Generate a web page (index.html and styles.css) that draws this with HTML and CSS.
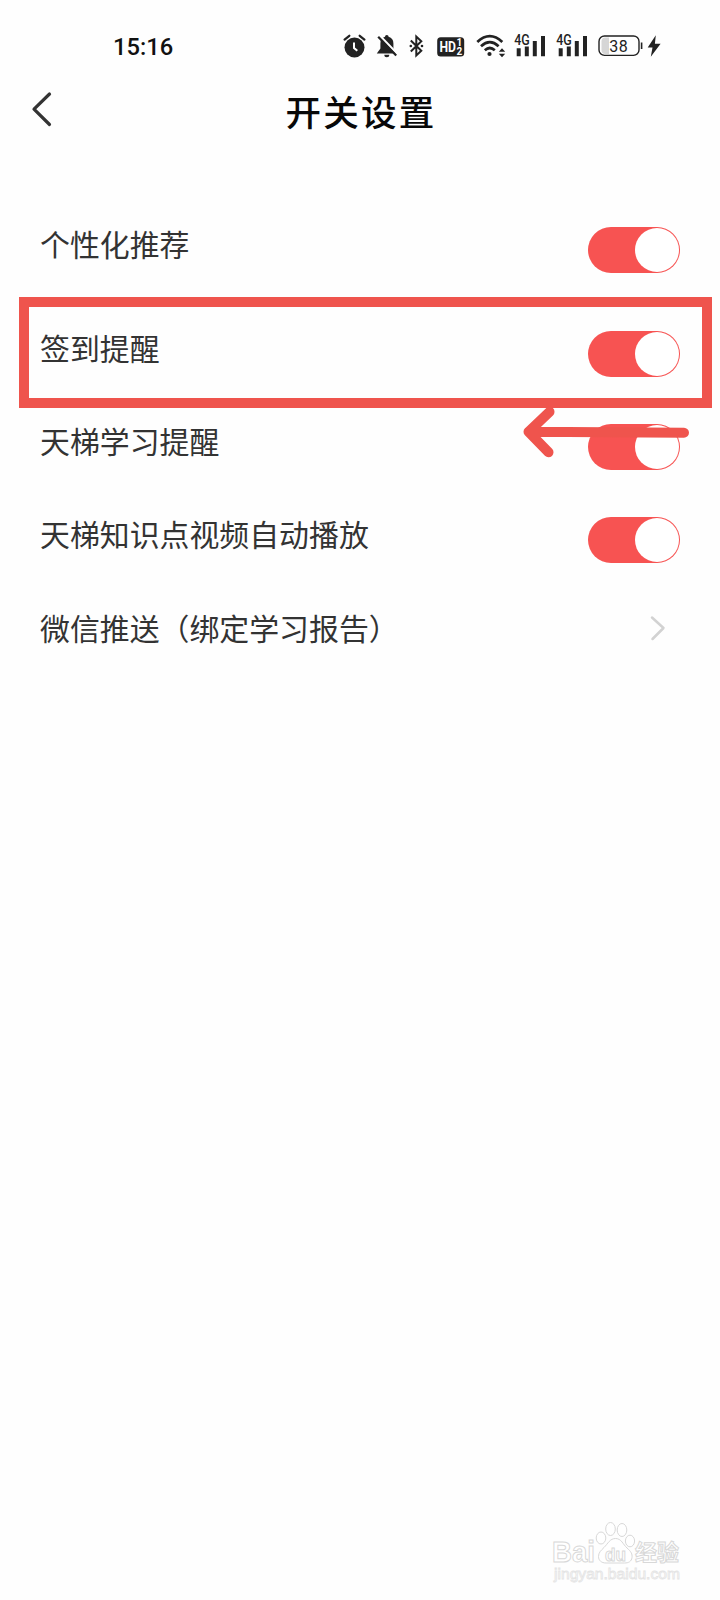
FILE: index.html
```html
<!DOCTYPE html>
<html lang="zh-CN">
<head>
  <meta charset="UTF-8">
  <meta name="viewport" content="width=device-width, initial-scale=1.0">
  <title>开关设置</title>
  <link rel="stylesheet" href="styles.css">
</head>
<body>
  <div class="page">
    <div class="status-bar">
      <span class="time">15:16</span>
      <div class="status-icons">
        <!-- alarm -->
        <svg width="26" height="30" viewBox="0 0 26 30">
          <circle cx="12.5" cy="16.5" r="10" fill="#222"/>
          <path d="M2.6 8.6L7.3 4.8M17.7 4.8L22.4 8.6" stroke="#222" stroke-width="2.3" stroke-linecap="round"/>
          <path d="M12 11.5V17L15.3 19.8" fill="none" stroke="#fff" stroke-width="2"/>
        </svg>
        <!-- muted bell -->
        <svg class="bell" width="26" height="30" viewBox="0 0 26 30">
          <path d="M12.8 4a1.8 1.8 0 0 1 1.8 1.8c3.3.9 4.8 3.4 4.8 6.6v5.2l3.1 4.8H2.8l3.6-5V12.4c0-3.2 1.4-5.7 4.6-6.6A1.8 1.8 0 0 1 12.8 4zM10.3 23.7h5a2.5 2.5 0 0 1-5 0z" fill="#222"/>
          <path d="M5.9 4.8L24 23.5" stroke="#fff" stroke-width="2.3"/>
          <path d="M4.2 5.8L22.2 24.6" stroke="#222" stroke-width="2.2"/>
        </svg>
        <!-- bluetooth -->
        <svg class="bluetooth" width="18" height="30" viewBox="0 0 18 30">
          <path d="M3.8 9.5L14.3 19.8L9.3 24.5V5.5L14.3 10.2L3.8 20.5" fill="none" stroke="#222" stroke-width="2"/>
          <circle cx="3.8" cy="15" r="1.3" fill="#222"/>
          <circle cx="15" cy="15" r="1.3" fill="#222"/>
        </svg>
        <!-- HD -->
        <svg class="hd" width="30" height="30" viewBox="0 0 30 30">
          <rect x="1.2" y="6.2" width="27" height="19.2" rx="3.5" fill="#222"/>
          <text class="hd-text" x="3.5" y="21.3" textLength="16.5" lengthAdjust="spacingAndGlyphs">HD</text>
          <text class="hd-small" x="20.5" y="15.3">1</text>
          <text class="hd-small" x="20.5" y="23.8">2</text>
        </svg>
        <!-- wifi -->
        <svg class="wifi" width="33" height="30" viewBox="0 0 33 30">
          <path d="M3.3 11Q15.8 -.8 28.3 11M7 15.2Q15.8 7.2 24.6 15.2M10.8 19.2Q15.8 14.8 20.8 19.2" fill="none" stroke="#222" stroke-width="2.7"/>
          <circle cx="15.5" cy="23" r="2.1" fill="#222"/>
          <path d="M24.8 20.7L28 17.2L31.2 20.7zM24.8 22.7L28 26.2L31.2 22.7z" fill="#222"/>
        </svg>
        <!-- mobile signal, sim 1 and sim 2 -->
        <svg class="signal" width="34" height="30" viewBox="0 0 34 30">
          <path d="M3.7 17.3h4V25.2h-4zM11.8 15.5h4V25.2h-4zM19.8 10h4V25.2h-4zM28 5h4V25.2h-4z" fill="#222"/>
          <text class="net-text" x="1.3" y="13.8" textLength="15.5" lengthAdjust="spacingAndGlyphs">4G</text>
        </svg>
        <svg class="signal" width="34" height="30" viewBox="0 0 34 30">
          <path d="M3.7 17.3h4V25.2h-4zM11.8 15.5h4V25.2h-4zM19.8 10h4V25.2h-4zM28 5h4V25.2h-4z" fill="#222"/>
          <text class="net-text" x="1.3" y="13.8" textLength="15.5" lengthAdjust="spacingAndGlyphs">4G</text>
        </svg>
        <!-- battery -->
        <svg class="battery" width="46" height="30" viewBox="0 0 46 30">
          <path d="M12 6.5v16.6H8.5a4 4 0 0 1-4-4v-8.6a4 4 0 0 1 4-4z" fill="#d6d6d6"/>
          <rect x="2" y="5" width="40" height="19.4" rx="5.5" fill="none" stroke="#222" stroke-width="1.4"/>
          <path d="M44.6 11.5v6.5" stroke="#222" stroke-width="1.6"/>
          <text class="battery-text" x="21.7" y="20.5" text-anchor="middle">38</text>
        </svg>
        <svg class="bolt" width="16" height="30" viewBox="0 0 16 30">
          <path d="M9.8 4.2L1.7 16.6H6.5L4.8 25.7L14.6 12.8H8.9z" fill="#222"/>
        </svg>
      </div>
    </div>

    <header class="header">
      <svg class="back" width="24" height="40" viewBox="0 0 24 40">
        <path d="M19.5 5L4 20.2L19.5 35.5" fill="none" stroke="#333" stroke-width="3.2" stroke-linecap="round" stroke-linejoin="round"/>
      </svg>
      <h1>开关设置</h1>
    </header>

    <div class="settings">
      <div class="row first">
        <span class="label">个性化推荐</span>
        <span class="switch"><span class="knob"></span></span>
      </div>
      <div class="row">
        <span class="label">签到提醒</span>
        <span class="switch"><span class="knob"></span></span>
        <div class="mark-box"></div>
      </div>
      <div class="row">
        <span class="label">天梯学习提醒</span>
        <span class="switch"><span class="knob"></span></span>
        <svg class="mark-arrow" width="172" height="56" viewBox="0 0 172 56">
          <path d="M11.5 27.8L167 28.8M32.5 7.8L11.5 27.8L31.5 48.3" fill="none" stroke="#ef544d" stroke-width="10" stroke-linecap="round" stroke-linejoin="round"/>
        </svg>
      </div>
      <div class="row">
        <span class="label">天梯知识点视频自动播放</span>
        <span class="switch"><span class="knob"></span></span>
      </div>
      <div class="row">
        <span class="label">微信推送（绑定学习报告）</span>
        <svg class="chevron" width="18" height="28" viewBox="0 0 18 28">
          <path d="M3 3.5L14.5 14L3.5 25" fill="none" stroke="#d2d2d2" stroke-width="2.5" stroke-linecap="round" stroke-linejoin="round"/>
        </svg>
      </div>
    </div>

    <div class="watermark">
      <svg width="132" height="62" viewBox="0 0 132 62">
        <g class="outline">
          <text class="wm-latin" x="0" y="41" textLength="43" lengthAdjust="spacingAndGlyphs">Bai</text>
          <ellipse cx="49" cy="17" rx="4.8" ry="6"/>
          <ellipse cx="58.5" cy="8" rx="4.8" ry="6.5"/>
          <ellipse cx="70" cy="9" rx="4.8" ry="6.5"/>
          <ellipse cx="78" cy="20" rx="4.6" ry="5.8"/>
          <path d="M63.5 17.5c6 0 7.500 6 11.500 9.500 4 3.500 5.500 6 5 9.500-.5 4-3.500 5.500-7.500 5.500H54c-4.500 0-7.500-2.500-7.500-6.500 0-4 2.500-6 5.500-9 4-4 6-9 11.500-9z"/>
          <text class="wm-du" x="53" y="39.500" textLength="21" lengthAdjust="spacingAndGlyphs">du</text>
          <text class="wm-cjk" x="83" y="39">经验</text>
        </g>
        <text class="wm-url" x="2" y="57.500" textLength="126" lengthAdjust="spacingAndGlyphs">jingyan.baidu.com</text>
      </svg>
    </div>
  </div>
</body>
</html>
```

FILE: styles.css
```css
body {
  margin: 0;
  background: #fefefe;
  font-family: "Noto Sans CJK SC", sans-serif;
}

.page {
  display: flex;
  flex-direction: column;
  height: 1600px;
  overflow: hidden;
}

/* status bar */
.status-bar {
  display: flex;
  justify-content: space-between;
  align-items: center;
  height: 30px;
  padding: 31px 58px 0 113px;
}

.time {
  font-family: Roboto, sans-serif;
  font-size: 23.7px;
  font-weight: 500;
  line-height: 30px;
  padding-top: 2px;
  color: #111;
}

.status-icons {
  display: flex;
}

.bell {
  margin-left: 6px;
}

.bluetooth {
  margin-left: 7px;
}

.hd {
  margin-left: 11px;
}

.wifi {
  margin-left: 8px;
}

.signal {
  margin-left: 6px;
}

.signal + .signal,
.battery {
  margin-left: 8px;
}

.bolt {
  margin-left: 3px;
}

.hd-text {
  font: bold 15px Roboto, sans-serif;
  fill: #fff;
}

.hd-small {
  font: bold 10px Roboto, sans-serif;
  fill: #fff;
}

.net-text {
  font: 500 14px Roboto, sans-serif;
  fill: #222;
}

.battery-text {
  font: 16px Roboto, sans-serif;
  letter-spacing: 0.5px;
  fill: #222;
}

/* title bar */
.header {
  display: grid;
  grid-template-columns: 60px 1fr 60px;
  padding-top: 28px;
  height: 60px;
}

.back {
  margin-left: 30px;
}

.header h1 {
  margin: -2px 0 0;
  font-size: 35.5px;
  font-weight: 500;
  letter-spacing: 2.3px;
  line-height: 48px;
  text-align: center;
  color: #080808;
  text-indent: 2px;
}

/* switch list */
.settings {
  padding-top: 54px;
}

.row {
  position: relative;
  display: flex;
  justify-content: space-between;
  align-items: center;
  height: 93.3px;
  padding: 0 40px;
}

.row.first {
  margin-bottom: 10.7px;
}

.label {
  font-size: 29.9px;
  line-height: 44px;
  padding-bottom: 14px;
  color: #333;
}

.switch {
  display: flex;
  justify-content: flex-end;
  box-sizing: border-box;
  width: 92px;
  height: 46px;
  padding: 1px;
  border-radius: 23px;
  background: #f75352;
}

.knob {
  width: 44px;
  height: 44px;
  border-radius: 50%;
  background: #fff;
}

.chevron {
  margin: 0 13px 12px 0;
}

/* red marks drawn over the list */
.mark-box {
  position: absolute;
  left: 19px;
  right: 8px;
  top: -9.5px;
  height: 91px;
  border: 10px solid #ef544d;
}

.mark-arrow {
  position: absolute;
  left: 517px;
  top: 4px;
}

/* watermark */
.watermark {
  margin-top: auto;
  padding: 0 0 17px 552px;
  height: 62px;
}

.outline {
  fill: #fff;
  stroke: #d8d8d8;
  stroke-width: 1;
}

.wm-latin {
  font: bold 30px "Liberation Sans", sans-serif;
}

.wm-du {
  font: bold 19px "Liberation Sans", sans-serif;
}

.wm-cjk {
  font: bold 22px "Noto Sans CJK SC", sans-serif;
}

.wm-url {
  font: 15px "Liberation Sans", sans-serif;
  fill: #fff;
  stroke: #e4e4e4;
  stroke-width: 0.8;
}
```
